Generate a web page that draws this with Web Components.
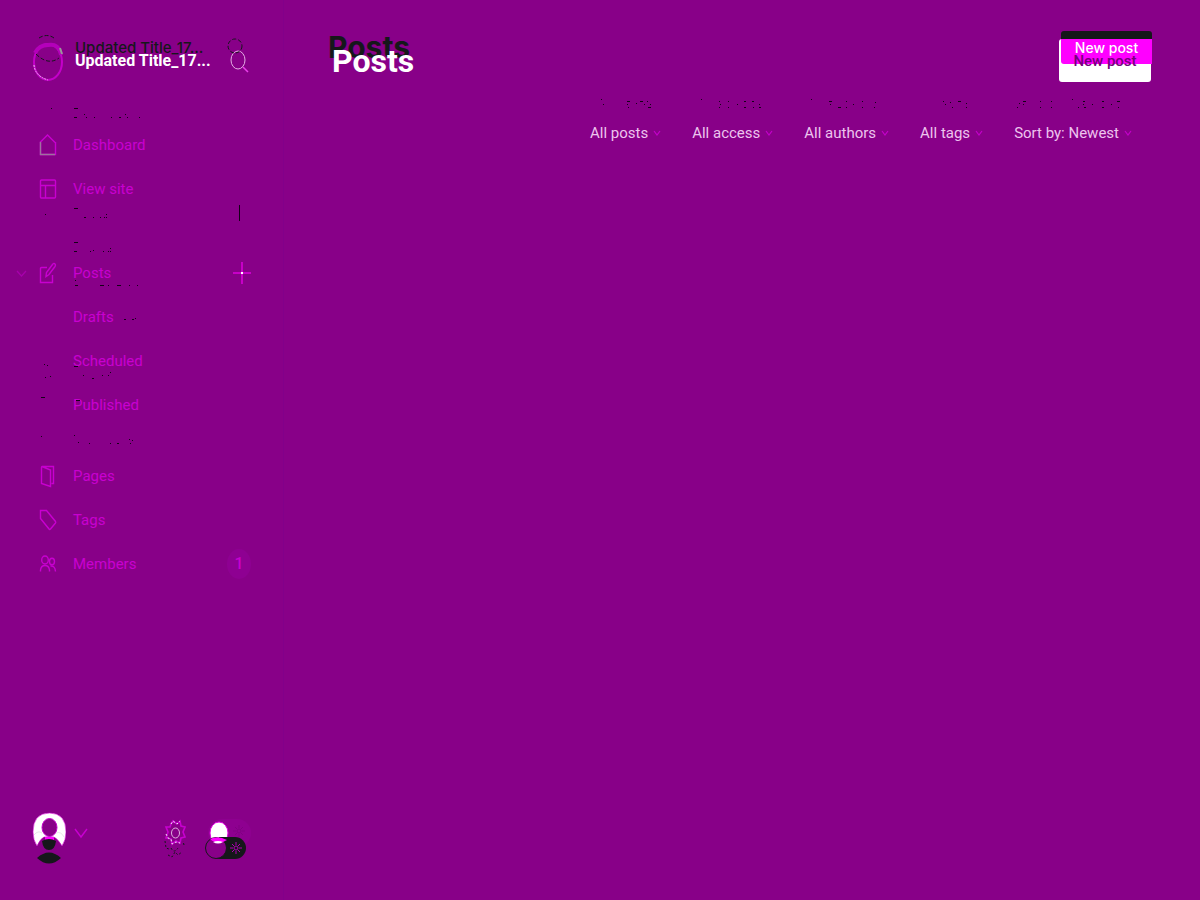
<!DOCTYPE html>
<html lang="en">
<head>
<meta charset="utf-8">
<title>Posts</title>
<style>
html, body { margin: 0; background: #880088; }
body { font-family: Roboto, Inter, sans-serif; font-size: 15px; color: #c800d0; }
</style>
</head>
<body>
<admin-app></admin-app>
<script>
const reset = `*{box-sizing:border-box}a{color:inherit;text-decoration:none}button{font:inherit;color:inherit;background:none;border:0;padding:0;margin:0}svg{display:block;fill:none;stroke:currentColor}`;
function define(name, html, setup) {
  const template = document.createElement('template');
  customElements.define(name, class extends HTMLElement {
    constructor() {
      super();
      template.innerHTML = '<style>' + reset + '</style>' + html;
      this.attachShadow({ mode: 'open' }).append(template.content.cloneNode(true));
      if (setup) setup(this);
    }
  });
}

const icons = {
  home: '<path d="M2 9.5L9.500 2L17 9.500M2.500 9V21.500H17.500V9"/><path d="M2.500 9V21.500H17" stroke="#a070a0"/>',
  layout: '<rect x="2.500" y="3" width="15" height="18" rx="1"/><path d="M2.500 8.500H17.500M7.500 8.500V21"/>',
  edit: '<path d="M9 6.500H3.500Q2.500 6.500 2.500 7.500V21.500H14.500V14"/><path d="M8 15.500L8.500 11.500L14.500 3.500Q16 1.500 17 3Q18 4 17 5.500L11 13.500Z"/>',
  pages: '<path d="M4 2.500H15.500V19.500H13.500M4 2.500Q3.500 2.500 3.500 3.500V19.500L12.500 22.500V6L4 2.500"/>',
  tag: '<path d="M2.500 2.500H8.500L17.500 13.500Q18 14.500 17.500 15L12.500 21Q11.500 22 11 21L2.500 10.500Z"/>',
  members: '<ellipse cx="7" cy="8" rx="3.300" ry="4"/><ellipse cx="14" cy="9.500" rx="2.500" ry="3.300"/><path d="M2.500 19.500V18Q3 13.500 7 13.500T11.500 18V19.500M12.500 14Q17 13.500 17.500 19.500"/>'
};

define('nav-item', `<style>
:host{display:block}
a{display:flex;align-items:center;height:44px;padding:0 32px 0 38px;font-size:15px;line-height:20px}
svg{width:20px;height:25px;margin-right:15px;flex:none;stroke-width:1.4}
.label{flex:1}
::slotted([slot=end]){flex:none}
:host([sub]) a{padding-left:73px}:host([sub]) svg{display:none}
</style><a href="#"><svg viewBox="0 0 20 25"></svg><span class="label"><slot></slot></span><slot name="end"></slot></a>`,
  el => el.shadowRoot.querySelector('svg').innerHTML = icons[el.getAttribute('icon')] || '');

define('site-header', `<style>
:host{display:flex;align-items:center;position:relative;height:42px;margin-top:40px;padding:0 34px 0 32px}
.logo{width:32px;height:42px;margin-right:11px}
strong{flex:1;font-size:16px;line-height:20px;color:#fff;white-space:nowrap;font-weight:700;position:relative}
.shadow{position:absolute;left:75px;top:-2px;font-family:Inter,sans-serif;font-size:15px;font-weight:500;line-height:20px;color:#15171a;white-space:nowrap}
button{margin-right:-1px}
button svg{width:20px;height:26px;color:#e4b0e4}
.old{position:absolute;left:226px;top:-3px;width:18px;height:18px;color:#15171a}
.arc{position:absolute;left:32px;top:-6px;width:32px;height:30px;color:#15171a}
</style>
<span class="shadow">Updated Title_17...</span>
<svg class="logo" viewBox="0 0 32 42"><ellipse cx="16" cy="22" rx="14" ry="18" stroke="#c400ca" stroke-width="2"/><path d="M3 13Q7 5 16 5Q27 3 29 15" stroke="#b400ba" stroke-width="4"/><path d="M2 25Q3 36 16 40" stroke="#eab8ea" stroke-dasharray="2 1"/><path d="M28 8L30 14" stroke="#999" stroke-width="2"/></svg>
<svg class="arc" viewBox="0 0 32 30"><path d="M7 4Q15 -1 22 4M4 20Q16 32 27 24" stroke-dasharray="4 2"/></svg>
<strong>Updated Title_17...</strong>
<svg class="old" viewBox="0 0 18 18"><circle cx="9" cy="9" r="7" stroke-dasharray="4 2"/></svg>
<button aria-label="Search"><svg viewBox="0 0 20 26"><ellipse cx="8" cy="12" rx="7" ry="9"/><path d="M13 19L18 24" stroke="#ec40ec" stroke-width="1.500"/></svg></button>`);

const sun = '<path d="M6 0V3M6 9V12M0 6H3M9 6H12M2 2L4 4M8 8L10 10M10 2L8 4M4 8L2 10"/><circle cx="6" cy="6" r="2"/>';
define('user-bar', `<style>
:host{display:flex;align-items:center;height:52px;padding:0 32px;margin-bottom:36px}
.avatar{display:flex;align-items:center}
.avatar svg:first-child{width:34px;height:52px}
.chev{width:14px;height:12px;margin:-10px 0 0 8px}
.gear{margin-left:auto}.gear svg{width:24px;height:52px}
label{margin-left:18px;display:grid;width:46px}
label>*{grid-area:1/1}input{opacity:0;width:44px;height:40px;margin:0}
label svg{width:46px;height:52px}
</style>
<button class="avatar" aria-label="Account"><svg viewBox="0 0 34 52"><path d="M5 34Q1 28 1 20Q1 1 17.500 1Q34 1 34 20Q34 28 30 34Q26 27 22 25H12Q8 27 5 34Z" fill="#fff" stroke="#d000d0" stroke-width=".6"/><ellipse cx="17.500" cy="15.500" rx="7.500" ry="9" fill="#880088" stroke="#c400ca"/><rect x="13" y="25" width="9" height="4" fill="#f0f" stroke="none"/><path d="M2 23Q6 18 10 21M24 21Q29 19 32 25" stroke="#ddd" stroke-width=".7"/><path d="M10 29Q17 25 24 29Q23 38 17 38Q11 38 10 29ZM5 46Q17 35 29 46Q17 57 5 46Z" fill="#15171a" stroke="none"/></svg><svg class="chev" viewBox="0 0 14 12"><path d="M1 2L7 10L13 2" stroke-width="1.4"/></svg></button>
<button class="gear" aria-label="Settings"><svg viewBox="0 0 24 52"><path d="M8 12L10 9L14 12L17 9L18 14L22 15L20 20L22 25L18 26L17 31L13 29L9 32L8 27L3 26L5 20L3 15L7 15Z" stroke-width="1.600"/><path d="M8 12L10 9L14 12L17 9M3 22L5 26L8 27L9 32L13 30L17 31" stroke="#eee" stroke-dasharray="2 2"/><ellipse cx="12.500" cy="21" rx="4" ry="5" stroke="#ddb0dd"/><path d="M2 29L3 36L6 37M5 43L9 45L12 40L15 43L19 40M21 33L20 29M8 36Q11 42 15 36" stroke="#15171a" stroke-dasharray="2 2"/></svg></button>
<label aria-label="Night mode"><input type="checkbox"><svg viewBox="0 0 46 52"><rect x="3" y="7" width="43" height="28" rx="14" fill="#8e0090" stroke="none"/><g transform="translate(28 13)" stroke="#800082">${sun}</g><ellipse cx="14" cy="21" rx="9" ry="11" fill="#fff" stroke="#e000e0"/><path d="M14 25H30A11 11 0 0 1 30 47H12Z" fill="#15171a" stroke="none"/><circle cx="11" cy="36" r="10.500" fill="#880088" stroke="#15171a"/><path d="M5 27Q13 23 22 28Q13 34 5 27Z" fill="#f0f" stroke="none"/><path d="M8 30Q13 28 18 30Q13 33 8 30Z" fill="#fff" stroke="none"/><g transform="translate(25 30)" stroke="#b000b4">${sun}</g></svg></label>`);

define('side-bar', `<style>
:host{display:flex;flex-direction:column;min-height:100vh;border-right:1px solid #82008a}
nav{margin-top:41px}
.group{margin-top:40px;position:relative}.group.next{margin-top:27px}
.caret{position:absolute;left:16px;top:19px;width:11px;height:8px;color:#a800ac}
.plus{width:18px;height:22px;color:#dc00dc}
.count{width:24px;height:30px;border-radius:50%;background:#8e0092;text-align:center;line-height:30px;font-size:16px;font-weight:500}
user-bar{margin-top:auto}
</style>
<site-header></site-header>
<nav>
<nav-item icon="home">Dashboard</nav-item><nav-item icon="layout">View site</nav-item>
<div class="group"><svg class="caret" viewBox="0 0 11 8"><path d="M1 1L5.500 6L10 1" stroke-width="1.200"/></svg>
<nav-item icon="edit">Posts<svg class="plus" slot="end" viewBox="0 0 18 22"><path d="M0 11H18M9 0V22" stroke-width="1.500"/><path d="M8 11H10" stroke="#fff" stroke-width="2"/></svg></nav-item>
<nav-item sub>Drafts</nav-item><nav-item sub>Scheduled</nav-item><nav-item sub>Published</nav-item></div>
<div class="group next"><nav-item icon="pages">Pages</nav-item><nav-item icon="tag">Tags</nav-item><nav-item icon="members">Members<span class="count" slot="end">1</span></nav-item></div>
</nav>
<user-bar></user-bar>`);

define('filter-menu', `<style>
:host{display:block}
button{display:flex;align-items:center;font-size:15px;line-height:20px;color:#edc4ee;font-weight:400;white-space:nowrap}
svg{width:8px;height:8px;margin-left:5px;color:#c400ca}
</style><button aria-haspopup="listbox"><slot></slot><svg viewBox="0 0 8 8"><path d="M1 2L4 6L7 2" stroke-width="1.200"/></svg></button>`);

define('new-post', `<style>
:host{display:block;position:relative;width:92px;height:43px;font-size:14px;font-weight:500;font-family:Inter,sans-serif}
button{position:relative;width:100%;height:43px;border-radius:3px;background:#fff;line-height:43px}
.bar{position:absolute;left:2px;right:-1px;top:-8px;height:10px;border-radius:3px 3px 0 0;background:#15171a}
.pink{position:absolute;left:2px;right:-1px;top:0;height:25px;border-radius:0 0 0 3px;background:#f0f}
.text{position:relative;color:#76007c;font-family:Roboto,sans-serif;font-size:15px}
.over{position:absolute;left:2px;right:-1px;top:0;color:#fff;line-height:18px;text-align:center}
</style><span class="bar"></span><button><span class="pink"></span><span class="text">New post</span><span class="over">New post</span></button>`);

define('page-main', `<style>
:host{display:block;padding:39px 49px 0 48px}
header{display:flex;justify-content:space-between;position:relative}
h1{margin:0;font-size:32px;line-height:44px;font-weight:700;color:#fff;position:relative}
.echo{position:absolute;left:-4px;top:-14px;color:#15171a;font-family:Inter,sans-serif;font-size:30px}
.front{position:relative}
.filters{display:flex;justify-content:flex-end;gap:31px;margin:40px 19px 0 0}
</style><header><h1><span class="echo">Posts</span><span class="front">Posts</span></h1><new-post></new-post></header>
<div class="filters"><filter-menu>All posts</filter-menu><filter-menu>All access</filter-menu><filter-menu>All authors</filter-menu><filter-menu>All tags</filter-menu><filter-menu>Sort by: Newest</filter-menu></div>`);

/* Each mark is x,y,width,height; the last two default to one pixel. */
define('dark-marks', `<style>:host{position:absolute;left:0;top:0;pointer-events:none}svg{fill:#150018;stroke:none}</style><svg width="1200" height="460" aria-hidden="true"></svg>`, el => {
  const marks = '51,108 74,108,4 74,117,3 86,117 94,117 111,117 119,117,2 127,117 139,117 84,114 125,114 74,208,4 45,214 84,217,2 93,217 100,217 104,217 106,217 106,214 239,205,1,16 74,242,4 74,251,3 90,251 93,250 103,251 108,251 110,251 110,248 75,280 75,285,3 100,285,4 108,285 117,285,4 129,285 137,285 124,319,2 132,319,2 135,318 44,364 47,365 45,377 50,376 74,366,4 83,375 92,378,2 102,375 108,375 110,372 41,397,4 76,400,4 41,436 74,435 78,442 89,443 110,443 117,443,2 129,439 132,440 130,443 601,99 603,104 627,101,3 627,104 628,107 636,103 640,101,3 644,104 647,101 650,104 648,107,3 701,99 719,101 720,104 719,107 728,101 728,107 737,104 744,101,2 744,107,2 752,101,2 753,107 759,104 759,107,2 811,99 829,101,3 830,104 838,107,3 846,101 846,107 853,104 862,101 862,107 875,102 874,107 943,101 945,104 950,102 952,107 958,101,3 966,103 966,107 1017,107 1019,103 1023,101,3 1023,104 1040,101 1040,107 1051,101 1051,107 1072,99 1078,107 1083,101,2 1083,104 1084,107,2 1092,104 1102,101,2 1102,107,2 1111,104 1117,101,3 1118,107';
  el.shadowRoot.querySelector('svg').innerHTML = marks.split(' ').map(m => {
    const [x, y, w = 1, h = 1] = m.split(',');
    return `<rect x="${x}" y="${y}" width="${w}" height="${h}"/>`;
  }).join('');
});

define('admin-app', `<style>
:host{display:grid;grid-template-columns:284px minmax(0,1fr);min-height:100vh;position:relative;overflow:hidden}
</style><side-bar></side-bar><page-main></page-main><dark-marks></dark-marks>`);
</script>
</body>
</html>
